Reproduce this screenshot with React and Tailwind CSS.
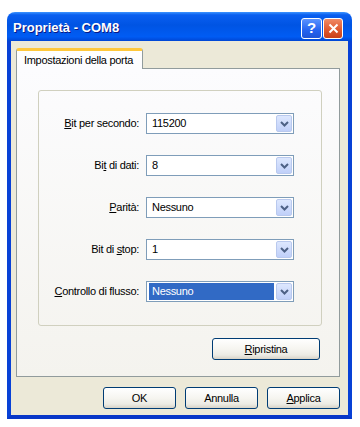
import React from 'react';

const font = "font-['Liberation_Sans',Arial,sans-serif]";

function Chevron() {
  return (
    <svg width="9" height="6" viewBox="0 0 9 6">
      <path d="M1 1 L4.5 4.5 L8 1" fill="none" stroke="#4d6185" strokeWidth="2" />
    </svg>
  );
}

function Combo({ value, selected }) {
  return (
    <div className="flex h-[21px] w-[148px] items-stretch border border-[#7f9db9] bg-white p-px">
      <div className="flex flex-1 items-center pl-px pr-[2px]">
        <span
          className={
            selected
              ? 'flex h-[17px] w-full items-center bg-[#316ac5] pl-[3px] text-white'
              : 'flex h-[17px] w-full items-center pl-[3px] text-black'
          }
        >
          {value}
        </span>
      </div>
      <div className="flex w-[16px] items-center justify-center rounded-[2px] border border-[#b9c9ee] bg-[linear-gradient(180deg,#dde7fe,#c0d0f9)]">
        <Chevron />
      </div>
    </div>
  );
}

function XpButton({ children, className = '' }) {
  return (
    <button
      className={`flex h-[22px] items-center justify-center rounded-[3px] border border-[#003c74] bg-[linear-gradient(180deg,#ffffff_0%,#f6f5f0_50%,#ecebe4_80%,#d8d3c7_100%)] text-[11px] text-black ${className}`}
    >
      {children}
    </button>
  );
}

const rows = [
  { label: <><span className="underline">B</span>it per secondo:</>, value: '115200' },
  { label: <>Bi<span className="underline">t</span> di dati:</>, value: '8' },
  { label: <><span className="underline">P</span>arità:</>, value: 'Nessuno' },
  { label: <>Bit di <span className="underline">s</span>top:</>, value: '1' },
  { label: <><span className="underline">C</span>ontrollo di flusso:</>, value: 'Nessuno', selected: true },
];

export default function App() {
  return (
    <div className={`h-[427px] w-[360px] overflow-hidden bg-white pl-[7px] pt-[12px] ${font} text-[11px] tracking-[-0.3px]`}>
      <div className="flex h-[407px] w-[345px] flex-col">
        {/* title bar */}
        <div className="flex h-[29px] shrink-0 items-center rounded-t-[8px] bg-[linear-gradient(180deg,#3d95ff_0%,#0a5ff0_10%,#0054e3_45%,#005cf4_85%,#0046d4_100%)] pl-[6px] pr-[9px]">
          <span className="mt-[2px] flex-1 text-[13px] font-bold tracking-[0px] text-white [text-shadow:1px_1px_0_#0a1883]">
            Proprietà - COM8
          </span>
          <div className="mt-[3px] flex gap-[1px]">
            <div className="flex h-[21px] w-[21px] items-center justify-center rounded-[3px] border border-white bg-[linear-gradient(180deg,#5b93ff,#2463f0_60%,#1e55d8)] text-[15px] font-bold tracking-[0px] text-white">
              ?
            </div>
            <div className="flex h-[21px] w-[20px] items-center justify-center rounded-[3px] border border-white bg-[linear-gradient(180deg,#f08a66,#e05a30_55%,#c8401a)]">
              <svg width="11" height="11" viewBox="0 0 11 11">
                <path d="M1.5 1.5 L9.5 9.5 M9.5 1.5 L1.5 9.5" stroke="white" strokeWidth="2" />
              </svg>
            </div>
          </div>
        </div>

        {/* body */}
        <div className="flex flex-1 flex-col border-x-4 border-b-4 border-x-[#0841d6] border-b-[#0837c8] bg-[#ece9d8] pl-[5px] pr-[8px] pt-[7px]">
          {/* tab */}
          <div className="relative z-10 -mb-px flex h-[21px] w-[127px] items-center rounded-t-[3px] border-x border-[#919b9c] border-t-[3px] border-t-[#ffc83c] bg-[linear-gradient(180deg,#ffffff,#fcfcfe)] pl-[7px] text-black">
            Impostazioni della porta
          </div>
          {/* panel */}
          <div className="flex h-[309px] flex-col border border-[#919b9c] bg-[linear-gradient(180deg,#fcfcfe,#f4f3ee)]">
            <div className="ml-[21px] mt-[21px] h-[236px] w-[284px] rounded-[3px] border border-[#d0d0bf] pt-[22px]">
              <div className="grid grid-cols-[100px_148px] items-center gap-x-[7px] gap-y-[21px]">
                {rows.map((r, i) => (
                  <React.Fragment key={i}>
                    <div className="text-right text-black">{r.label}</div>
                    <Combo value={r.value} selected={r.selected} />
                  </React.Fragment>
                ))}
              </div>
            </div>
            <div className="mr-[19px] mt-[12px] flex justify-end">
              <XpButton className="w-[108px]">
                <span><span className="underline">R</span>ipristina</span>
              </XpButton>
            </div>
          </div>
          {/* bottom buttons */}
          <div className="mt-[10px] flex justify-end gap-[9px]">
            <XpButton className="w-[73px]">OK</XpButton>
            <XpButton className="w-[73px]">Annulla</XpButton>
            <XpButton className="w-[73px]">
              <span><span className="underline">A</span>pplica</span>
            </XpButton>
          </div>
        </div>
      </div>
    </div>
  );
}
